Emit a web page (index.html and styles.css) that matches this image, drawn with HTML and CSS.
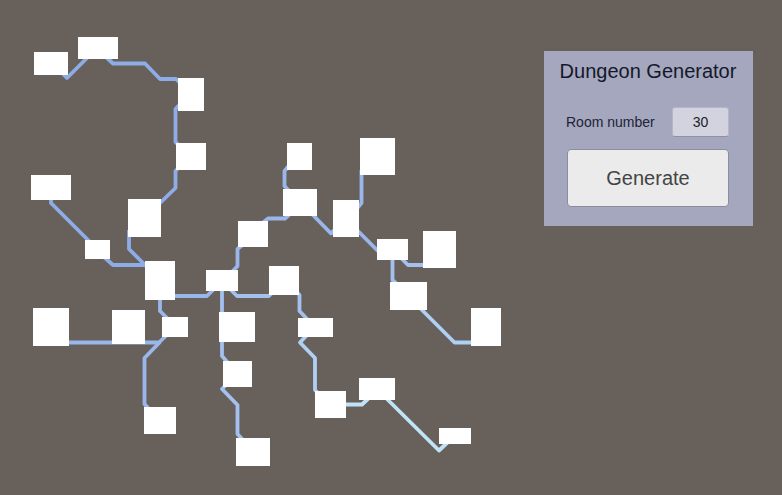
FILE: index.html
```html
<!DOCTYPE html>
<html lang="en">
<head>
<meta charset="utf-8">
<title>Dungeon Generator</title>
<link rel="stylesheet" href="styles.css">
</head>
<body>
<main class="stage">
  <svg class="map" viewBox="0 0 544 495" preserveAspectRatio="xMinYMin meet" role="img" aria-label="Dungeon map">
    <g class="corridors">
      <g class="depth-1">
        <path d="M60 71 67 78 90 55"/>
        <path d="M106 57 113 63.500H145L160 79H176L182 85"/>
        <path d="M182 102 175.500 109V142L182 148"/>
        <path d="M182 164 175.500 171V188L158 205"/>
        <path d="M51 195V203L91 243"/>
        <path d="M129 230V249L147 267"/>
        <path d="M104 257 113 265H150"/>
      </g>
      <g class="depth-2">
        <path d="M65 342.500H159L170 332"/>
        <path d="M160 295V311L168 319"/>
        <path d="M160 342 144.500 358V404L150 410"/>
        <path d="M170 296H207L215 288"/>
        <path d="M231 273 237.500 266V249L245 243"/>
        <path d="M260 225 268 218.500H285L292 212"/>
        <path d="M291 163 284.500 171V186L291 193"/>
        <path d="M309 211 331 233.500 338 226"/>
        <path d="M361.500 170V203L354 212"/>
        <path d="M355 228 384 257"/>
      </g>
      <g class="depth-3">
        <path d="M229 288 237 296H269L275 290"/>
        <path d="M222 287V356L229 364"/>
        <path d="M229 382 222 389 237.500 405V434L243 440"/>
        <path d="M293 288 299.500 295V311L309 321"/>
        <path d="M392.500 255V280L400 287"/>
        <path d="M400 257 408 265H427"/>
      </g>
      <g class="depth-4">
        <path d="M308 334 300 342.500 315 358V390L321 396"/>
        <path d="M418 306 454.500 342.500H475"/>
      </g>
      <g class="depth-5">
        <path d="M340 404.500H362L371 396"/>
        <path d="M384 396 439 450.500 448 442"/>
      </g>
    </g>
    <g class="rooms">
      <rect x="34" y="52" width="34" height="23"/>
      <rect x="78" y="37" width="40" height="22"/>
      <rect x="178" y="78" width="26" height="33"/>
      <rect x="176" y="143" width="30" height="27"/>
      <rect x="31" y="175" width="40" height="25"/>
      <rect x="128" y="199" width="33" height="38"/>
      <rect x="85" y="240" width="25" height="19"/>
      <rect x="145" y="261" width="30" height="39"/>
      <rect x="33" y="308" width="36" height="38"/>
      <rect x="112" y="310" width="33" height="34"/>
      <rect x="162" y="317" width="26" height="20"/>
      <rect x="144" y="407" width="32" height="27"/>
      <rect x="287" y="143" width="25" height="27"/>
      <rect x="283" y="189" width="34" height="27"/>
      <rect x="238" y="221" width="30" height="26"/>
      <rect x="206" y="270" width="32" height="21"/>
      <rect x="269" y="266" width="30" height="29"/>
      <rect x="360" y="138" width="35" height="37"/>
      <rect x="333" y="200" width="26" height="37"/>
      <rect x="377" y="239" width="31" height="21"/>
      <rect x="423" y="231" width="33" height="37"/>
      <rect x="390" y="282" width="37" height="28"/>
      <rect x="471" y="308" width="30" height="38"/>
      <rect x="219" y="312" width="36" height="30"/>
      <rect x="223" y="361" width="29" height="26"/>
      <rect x="236" y="438" width="34" height="28"/>
      <rect x="298" y="318" width="35" height="19"/>
      <rect x="315" y="391" width="31" height="27"/>
      <rect x="359" y="378" width="36" height="22"/>
      <rect x="439" y="428" width="32" height="16"/>
    </g>
  </svg>
  <form class="panel">
    <h1 class="title">Dungeon Generator</h1>
    <div class="field">
      <label class="label" for="rooms">Room number</label>
      <input class="input" id="rooms" type="text" inputmode="numeric" value="30">
    </div>
    <button class="generate" type="button">Generate</button>
  </form>
</main>
</body>
</html>
```

FILE: styles.css
```css
* { box-sizing: border-box; }

body {
  margin: 0;
  background: #68615b;
  font-family: "Liberation Sans", Arial, sans-serif;
}

.stage {
  display: flex;
  align-items: flex-start;
  min-height: 100vh;
}

.map {
  display: block;
  flex: 1;
  min-width: 0;
}

.corridors {
  fill: none;
  stroke-width: 3.8;
  stroke-linejoin: round;
}

.depth-1 { stroke: #8eace8; }
.depth-2 { stroke: #9ab7ec; }
.depth-3 { stroke: #a3c0ee; }
.depth-4 { stroke: #afd0f4; }
.depth-5 { stroke: #c0e3f8; }

.rooms { fill: #fff; }

.panel {
  flex: 0 0 209px;
  margin: 51px 29px 0 0;
  padding: 8px 24px 19px 23px;
  background: #a4a7be;
}

.title {
  margin: 0 -16px 24px;
  color: #15182a;
  font-size: 20px;
  font-weight: 400;
  line-height: 24px;
  text-align: center;
  white-space: nowrap;
}

.field {
  display: flex;
  align-items: center;
  justify-content: space-between;
  margin: 0 0 12px -1px;
}

.label {
  color: #202335;
  font-size: 14px;
  line-height: 28px;
}

.input {
  width: 57px;
  height: 30px;
  padding: 0;
  border: 1px solid #b4b6c8;
  border-bottom-color: #8d90a6;
  border-radius: 3px;
  background: #d2d3df;
  color: #202028;
  font: 14px "Liberation Sans", Arial, sans-serif;
  text-align: center;
}

.generate {
  display: block;
  width: 100%;
  height: 58px;
  padding: 0;
  border: 1px solid #8b8d9c;
  border-radius: 4px;
  background: #ebebeb;
  color: #444;
  font: 20px "Liberation Sans", Arial, sans-serif;
}
```
